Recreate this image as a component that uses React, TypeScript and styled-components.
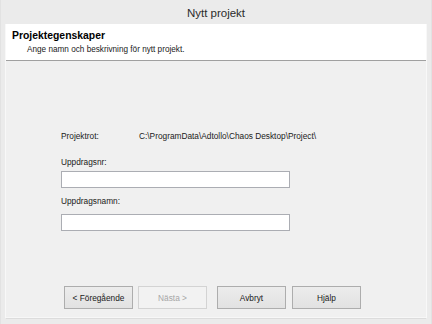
import styled, { createGlobalStyle } from "styled-components";

const Global = createGlobalStyle`
  html, body {
    margin: 0;
    padding: 0;
    background: #ebebeb;
  }
  * { box-sizing: border-box; }
`;

const Window = styled.div`
  width: 432px;
  height: 324px;
  display: flex;
  flex-direction: column;
  background: #ebebeb;
  border-left: 1px solid #e2e2e2;
  border-right: 1px solid #e2e2e2;
  font-family: "Liberation Sans", Arial, sans-serif;
  overflow: hidden;
`;

const TitleBar = styled.div`
  height: 24px;
  display: flex;
  align-items: center;
  justify-content: center;
  font-size: 11.5px;
  color: #2b2b2b;
  padding-top: 1px;
`;

const Client = styled.div`
  flex: 1;
  margin: 0 5px 6px 5px;
  display: flex;
  flex-direction: column;
  background: #f0f0f0;
  border-bottom: 1px solid #f7f7f7;
  box-shadow: 0 1px 0 #dcdcdc, 1px 0 0 #f8f8f8, -1px 0 0 #f8f8f8;
`;

const Header = styled.div`
  height: 37px;
  background: #ffffff;
  border-bottom: 1px solid #a0a0a0;
  padding: 6px 0 0 6px;
`;

const HeaderTitle = styled.div`
  font-size: 10.4px;
  font-weight: bold;
  color: #000;
  line-height: 12px;
`;

const HeaderText = styled.div`
  font-size: 8.2px;
  color: #1a1a1a;
  line-height: 10px;
  margin: 3px 0 0 15px;
`;

const Form = styled.div`
  padding: 70px 0 0 55px;
  display: flex;
  flex-direction: column;
`;

const Row = styled.div`
  display: flex;
  font-size: 8.3px;
  line-height: 10px;
  color: #1a1a1a;
`;

const RowLabel = styled.div`
  width: 78px;
`;

const Label = styled.div<{ $top: number }>`
  font-size: 8.3px;
  line-height: 10px;
  color: #1a1a1a;
  margin-top: ${(p) => p.$top}px;
`;

const Input = styled.input<{ $top: number }>`
  width: 229px;
  height: 17px;
  margin-top: ${(p) => p.$top}px;
  border: 1px solid #abadb3;
  background: #ffffff;
  padding: 0 2px;
  font-family: inherit;
  font-size: 8.3px;
  outline: none;
`;

const ButtonRow = styled.div`
  display: flex;
  margin-top: auto;
  padding: 0 0 8px 58px;
`;

const Button = styled.button<{ $gap: number; $disabled?: boolean }>`
  width: 69px;
  height: 23px;
  margin-left: ${(p) => p.$gap}px;
  border: 1px solid ${(p) => (p.$disabled ? "#d3d3d3" : "#adadad")};
  background: ${(p) =>
    p.$disabled ? "#f2f2f2" : "linear-gradient(#ececec, #e2e2e2)"};
  color: ${(p) => (p.$disabled ? "#a6a6a6" : "#1a1a1a")};
  font-family: "Liberation Sans", Arial, sans-serif;
  font-size: 8.3px;
  padding: 0;
`;

export default function App() {
  return (
    <>
      <Global />
      <Window>
        <TitleBar>Nytt projekt</TitleBar>
        <Client>
          <Header>
            <HeaderTitle>Projektegenskaper</HeaderTitle>
            <HeaderText>Ange namn och beskrivning för nytt projekt.</HeaderText>
          </Header>
          <Form>
            <Row>
              <RowLabel>Projektrot:</RowLabel>
              <div>C:\ProgramData\Adtollo\Chaos Desktop\Project\</div>
            </Row>
            <Label $top={16}>Uppdragsnr:</Label>
            <Input $top={4} />
            <Label $top={8}>Uppdragsnamn:</Label>
            <Input $top={8} />
          </Form>
          <ButtonRow>
            <Button $gap={0}>&lt; Föregående</Button>
            <Button $gap={5} $disabled>Nästa &gt;</Button>
            <Button $gap={10}>Avbryt</Button>
            <Button $gap={6}>Hjälp</Button>
          </ButtonRow>
        </Client>
      </Window>
    </>
  );
}
